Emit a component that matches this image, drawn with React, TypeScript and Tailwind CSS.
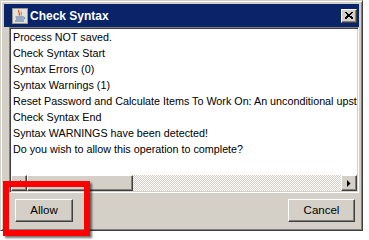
import React from "react";

const lines = [
  "Process NOT saved.",
  "Check Syntax Start",
  "Syntax Errors (0)",
  "Syntax Warnings (1)",
  "Reset Password and Calculate Items To Work On: An unconditional upstream path was found",
  "Check Syntax End",
  "Syntax WARNINGS have been detected!",
  "Do you wish to allow this operation to complete?",
];

function JavaIcon() {
  return (
    <svg width="16" height="16" viewBox="0 0 16 16">
      <rect x="0.5" y="0.5" width="15" height="15" fill="#e4e2dc" stroke="#9a9890" />
      <path d="M7 2 C5 4 9 5 7 7.5" stroke="#e0541c" strokeWidth="1.3" fill="none" />
      <path d="M9.5 3.5 C8 5 10.5 6 9 7.5" stroke="#f08020" strokeWidth="1.1" fill="none" />
      <path d="M3.5 9 H11 M4 11 H10.5 M3 13 H12" stroke="#4a6ea8" strokeWidth="1" fill="none" />
      <path d="M11 9 C13.5 9 13.5 11.5 10.5 11" stroke="#4a6ea8" strokeWidth="1" fill="none" />
    </svg>
  );
}

function Btn({ children, w }: { children: React.ReactNode; w: string }) {
  return (
    <div
      className={`${w} h-[23px] flex items-center justify-center bg-[#d4d0c8] border border-t-white border-l-white border-r-[#404040] border-b-[#404040] shadow-[inset_-1px_-1px_#808080] text-[11.5px] text-black`}
    >
      {children}
    </div>
  );
}

export default function App() {
  return (
    <div
      className="relative w-[369px] h-[240px] bg-white overflow-hidden"
      style={{ fontFamily: '"Liberation Sans", Arial, sans-serif' }}
    >
      <div className="w-[363px] h-[231px] flex flex-col bg-[#d4d0c8] border border-t-[#d4d0c8] border-l-[#d4d0c8] border-r-[#404040] border-b-[#404040] shadow-[inset_1px_1px_#ffffff,inset_-1px_-1px_#808080] p-[3px]">
        {/* title bar */}
        <div className="h-[23px] shrink-0 bg-[#0a246a] flex items-center pl-[8px] pr-[2px]">
          <JavaIcon />
          <span className="ml-[2px] text-white font-bold text-[12px] leading-none">Check Syntax</span>
          <div className="ml-auto w-[16px] h-[14px] bg-[#d4d0c8] border border-t-white border-l-white border-r-[#404040] border-b-[#404040] shadow-[inset_-1px_-1px_#808080] flex items-center justify-center">
            <svg width="8" height="7" viewBox="0 0 8 7">
              <path d="M0 0 L7 6.5 M1 0 L8 6.5 M7 0 L0 6.5 M8 0 L1 6.5" stroke="#000" strokeWidth="1" shapeRendering="crispEdges" />
            </svg>
          </div>
        </div>
        {/* text area */}
        <div className="ml-[5px] h-[166px] shrink-0 flex flex-col border border-t-[#808080] border-l-[#808080] border-r-white border-b-white shadow-[inset_1px_1px_#404040,inset_-1px_-1px_#d4d0c8] p-[1px]">
          <div className="flex-1 bg-white overflow-hidden pl-[2px]">
            {lines.map((l, i) => (
              <div key={i} className="h-[16px] leading-[16px] text-[10.75px] text-black whitespace-nowrap">
                {l}
              </div>
            ))}
          </div>
          {/* horizontal scrollbar */}
          <div className="h-[16px] shrink-0 flex bg-[image:repeating-conic-gradient(#d4d0c8_0%_25%,#ffffff_0%_50%)] bg-[length:2px_2px]">
            <div className="w-[16px] h-[16px] bg-[#d4d0c8] border border-t-white border-l-white border-r-[#404040] border-b-[#404040] shadow-[inset_-1px_-1px_#808080] flex items-center justify-center">
              <svg width="4" height="7" viewBox="0 0 4 7">
                <path d="M4 0 L0.5 3.5 L4 7 Z" fill="#000" />
              </svg>
            </div>
            <div className="w-[106px] h-[16px] bg-[#d4d0c8] border border-t-white border-l-white border-r-[#404040] border-b-[#404040] shadow-[inset_-1px_-1px_#808080]" />
            <div className="flex-1" />
            <div className="w-[16px] h-[16px] bg-[#d4d0c8] border border-t-white border-l-white border-r-[#404040] border-b-[#404040] shadow-[inset_-1px_-1px_#808080] flex items-center justify-center">
              <svg width="4" height="7" viewBox="0 0 4 7">
                <path d="M0 0 L3.5 3.5 L0 7 Z" fill="#000" />
              </svg>
            </div>
          </div>
        </div>
        {/* buttons */}
        <div className="mt-[6px] flex pl-[11px] pr-[4px]">
          <Btn w="w-[58px]">Allow</Btn>
          <div className="flex-1" />
          <Btn w="w-[67px]">Cancel</Btn>
        </div>
      </div>
      {/* red highlight annotation */}
      <div className="absolute left-[3px] top-[181px] w-[87px] h-[55px] border-[6px] border-[#ff0000] shadow-[2px_2px_2px_rgba(0,0,0,0.55)]" />
    </div>
  );
}
